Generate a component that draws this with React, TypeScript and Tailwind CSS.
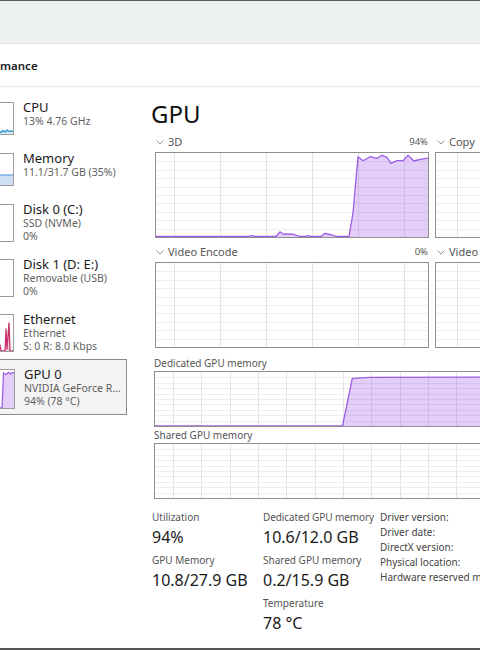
import React from "react";

type Pt = [number, number];

function Grid({ w, h, vx, rows }: { w: number; h: number; vx: number[]; rows: number }) {
  const hs = Array.from({ length: rows - 1 }, (_, i) => Math.round(((i + 1) * h) / rows) + 0.5);
  return (
    <g shapeRendering="crispEdges">
      {hs.map((y, i) => (
        <line key={"h" + i} x1={0} x2={w} y1={y} y2={y} stroke="#eeeeee" strokeWidth={1} />
      ))}
      {vx.map((x, i) => (
        <line key={"v" + i} x1={x + 0.5} x2={x + 0.5} y1={0} y2={h} stroke="#e4e4e4" strokeWidth={1} />
      ))}
    </g>
  );
}

function Series({ pts, h, stroke, fill }: { pts: Pt[]; h: number; stroke: string; fill: string }) {
  const line = pts.map((p) => p.join(",")).join(" ");
  const area = `${pts[0][0]},${h} ${line} ${pts[pts.length - 1][0]},${h}`;
  return (
    <g>
      <polygon points={area} fill={fill} />
      <polyline points={line} fill="none" stroke={stroke} strokeWidth={1.3} strokeLinejoin="round" />
    </g>
  );
}

function GraphBox({
  w,
  h,
  vx,
  rows = 10,
  children,
}: {
  w: number;
  h: number;
  vx: number[];
  rows?: number;
  children?: React.ReactNode;
}) {
  return (
    <div className="border border-[#8f8f8f] bg-white shrink-0" style={{ width: w + 2, height: h + 2 }}>
      <svg width={w} height={h} className="block">
        <Grid w={w} h={h} vx={vx} rows={rows} />
        {children}
      </svg>
    </div>
  );
}

function Chevron() {
  return (
    <svg width="8" height="5" viewBox="0 0 8 5" className="shrink-0">
      <polyline points="0.5,0.5 4,4 7.5,0.5" fill="none" stroke="#8a8a8a" strokeWidth="0.9" />
    </svg>
  );
}

const PURPLE = "#9d5ce8";
const PURPLE_FILL = "rgba(150,80,230,0.28)";

const gpu3d: Pt[] = [
  [0, 83.5],
  [92, 83.5],
  [95, 82.6],
  [99, 83.5],
  [120, 83.5],
  [124, 78.8],
  [128, 81.5],
  [131, 81],
  [137, 81.2],
  [144, 83.5],
  [150, 83.5],
  [152, 82.6],
  [155, 83.5],
  [165, 83.5],
  [169, 80.3],
  [176, 82],
  [181, 83.5],
  [193, 83.5],
  [197, 60],
  [202, 3.7],
  [207, 7.7],
  [214, 3.7],
  [221, 5.3],
  [226, 2.3],
  [231, 4.3],
  [235, 10.3],
  [241, 7.7],
  [247, 7.7],
  [252, 2.3],
  [258, 8],
  [264, 6.3],
  [270, 5.3],
  [272, 5.3],
];

const dedicated: Pt[] = [
  [0, 54],
  [187.5, 54],
  [197.3, 6.3],
  [215, 5.4],
  [330, 5.2],
];

function Thumb({ h, children }: { h: number; children?: React.ReactNode }) {
  return (
    <div className="-ml-[26px] mt-[3px] w-[40px] shrink-0 border border-[#9c9c9c] bg-white" style={{ height: h }}>
      <svg width="38" height={h - 2} className="block">
        {children}
      </svg>
    </div>
  );
}

function SideItem({
  title,
  lines,
  thumbH,
  height,
  selected,
  thumb,
}: {
  title: string;
  lines: string[];
  thumbH: number;
  height: number;
  selected?: boolean;
  thumb?: React.ReactNode;
}) {
  return (
    <div
      className={
        "flex shrink-0 items-start pt-[6px] " +
        (selected ? "-ml-[1px] w-[128px] border border-[#8a8a8a] bg-[#f3f3f3] pl-[1px]" : "w-[127px]")
      }
      style={{ height }}
    >
      <Thumb h={thumbH}>{thumb}</Thumb>
      <div className="ml-[9px] flex flex-col">
        <div className="text-[13px] leading-[16px] text-[#1a1a1a] whitespace-nowrap">{title}</div>
        {lines.map((l) => (
          <div key={l} className="text-[10.5px] leading-[13px] text-[#5f5f5f] whitespace-nowrap">
            {l}
          </div>
        ))}
      </div>
    </div>
  );
}

export default function App() {
  const vTop = [18, 64, 110, 156, 202, 248];
  const vRight = [21, 67, 113, 159, 205, 251];
  const vMem = [18, 46, 75, 103, 131, 160, 188, 216, 245, 273, 301];

  const cpuPts: Pt[] = [
    [0, 30],
    [20, 29],
    [24, 28],
    [26, 29.5],
    [28, 27.5],
    [30, 29],
    [32, 27],
    [34, 28.5],
    [36, 27.8],
    [38, 28.5],
  ];
  const ethPts: Pt[] = [
    [0, 36],
    [14, 36],
    [16, 20],
    [17, 36],
    [19, 28],
    [20, 36],
    [22, 24],
    [23, 34],
    [25, 30],
    [26, 36],
    [30, 36],
    [31, 14],
    [32, 34],
    [34, 8],
    [35, 36],
    [38, 36],
  ];

  return (
    <div className="relative flex h-[650px] w-[480px] flex-col overflow-hidden bg-white font-['Noto_Sans','Open_Sans',sans-serif]">
      {/* title bar */}
      <div className="h-[1px] shrink-0 bg-[#5c5c5c]" />
      <div className="h-[43px] shrink-0 border-b border-[#e1e7e6] bg-[#edf2f1]" />
      {/* header */}
      <div className="flex h-[43px] shrink-0 items-center border-b border-[#e9e9e9] pt-[1px]">
        <span className="text-[11.5px] font-semibold text-[#1b1b1b]">mance</span>
      </div>

      <div className="flex min-h-0 flex-1">
        {/* sidebar */}
        <div className="flex w-[128px] shrink-0 flex-col overflow-hidden pt-[6px]">
          <SideItem
            title="CPU"
            lines={["13% 4.76 GHz"]}
            thumbH={33}
            height={51}
            thumb={<Series pts={cpuPts} h={31} stroke="#2a8fc7" fill="#d4e9f5" />}
          />
          <SideItem
            title="Memory"
            lines={["11.1/31.7 GB (35%)"]}
            thumbH={33}
            height={51}
            thumb={
              <g>
                <rect x="0" y="21" width="38" height="10" fill="#cfe0f6" />
                <line x1="0" x2="38" y1="21" y2="21" stroke="#4b8fd6" strokeWidth="1" />
              </g>
            }
          />
          <SideItem title="Disk 0 (C:)" lines={["SSD (NVMe)", "0%"]} thumbH={38} height={55} />
          <SideItem title="Disk 1 (D: E:)" lines={["Removable (USB)", "0%"]} thumbH={38} height={55} />
          <SideItem
            title="Ethernet"
            lines={["Ethernet", "S: 0 R: 8.0 Kbps"]}
            thumbH={38}
            height={54}
            thumb={<Series pts={ethPts} h={36} stroke="#c8316c" fill="#f3d3df" />}
          />
          <SideItem
            title="GPU 0"
            lines={["NVIDIA GeForce R...", "94%  (78 °C)"]}
            thumbH={40}
            height={56}
            selected
            thumb={
              <Series
                pts={[
                  [0, 38],
                  [26, 38],
                  [27.5, 3],
                  [30, 4.5],
                  [32.5, 2.5],
                  [34.5, 4],
                  [36.5, 2.5],
                  [38, 3],
                ]}
                h={38}
                stroke={PURPLE}
                fill={PURPLE_FILL}
              />
            }
          />
        </div>

        {/* main */}
        <div className="ml-[22px] flex min-w-0 flex-1 flex-col overflow-hidden">
          <div className="pl-[1px] pt-[13px] text-[24px] leading-[28px] text-[#111]">GPU</div>

          {/* row 1 */}
          <div className="mt-[7px] flex gap-[6px] pl-[5px]">
            <div className="flex w-[274px] shrink-0 flex-col">
              <div className="flex h-[14px] items-center pr-[1px]">
                <div className="flex items-center gap-[4px] pl-[1px]">
                  <Chevron />
                  <span className="text-[11px] text-[#555]">3D</span>
                </div>
                <span className="ml-auto text-[9.5px] text-[#555]">94%</span>
              </div>
              <div className="mt-[3px]">
                <GraphBox w={272} h={84} vx={vTop}>
                  <Series pts={gpu3d} h={84} stroke={PURPLE} fill={PURPLE_FILL} />
                </GraphBox>
              </div>
            </div>
            <div className="flex w-[274px] shrink-0 flex-col">
              <div className="flex h-[14px] items-center gap-[4px] pl-[2px]">
                <Chevron />
                <span className="text-[11px] text-[#555]">Copy</span>
              </div>
              <div className="mt-[3px]">
                <GraphBox w={272} h={84} vx={vRight} />
              </div>
            </div>
          </div>

          {/* row 2 */}
          <div className="mt-[7px] flex gap-[6px] pl-[5px]">
            <div className="flex w-[274px] shrink-0 flex-col">
              <div className="flex h-[14px] items-center pr-[1px]">
                <div className="flex items-center gap-[4px] pl-[1px]">
                  <Chevron />
                  <span className="text-[11px] text-[#555]">Video Encode</span>
                </div>
                <span className="ml-auto text-[9.5px] text-[#555]">0%</span>
              </div>
              <div className="mt-[3px]">
                <GraphBox w={272} h={84} vx={vTop} />
              </div>
            </div>
            <div className="flex w-[274px] shrink-0 flex-col">
              <div className="flex h-[14px] items-center gap-[4px] pl-[2px]">
                <Chevron />
                <span className="whitespace-nowrap text-[11px] text-[#555]">Video Decode</span>
              </div>
              <div className="mt-[3px]">
                <GraphBox w={272} h={84} vx={vRight} />
              </div>
            </div>
          </div>

          {/* dedicated memory */}
          <div className="mt-[8px] pl-[4px]">
            <div className="h-[14px] text-[10px] leading-[14px] text-[#555]">Dedicated GPU memory</div>
            <div className="mt-[1px]">
              <GraphBox w={340} h={54} vx={vMem}>
                <Series pts={dedicated} h={54} stroke={PURPLE} fill={PURPLE_FILL} />
              </GraphBox>
            </div>
          </div>

          {/* shared memory */}
          <div className="mt-[1px] pl-[4px]">
            <div className="h-[14px] text-[10px] leading-[14px] text-[#555]">Shared GPU memory</div>
            <div className="mt-[1px]">
              <GraphBox w={340} h={54} vx={vMem} />
            </div>
          </div>

          {/* stats */}
          <div className="mt-[10px] flex pl-[2px]">
            <div className="flex w-[111px] shrink-0 flex-col">
              <div className="mb-[3px]">
                <div className="text-[10px] leading-[16px] text-[#555]">Utilization</div>
                <div className="text-[16px] leading-[24px] text-[#1a1a1a]">94%</div>
              </div>
              <div className="mb-[3px]">
                <div className="text-[10px] leading-[16px] text-[#555]">GPU Memory</div>
                <div className="whitespace-nowrap text-[16px] leading-[24px] text-[#1a1a1a]">10.8/27.9 GB</div>
              </div>
            </div>
            <div className="flex w-[117px] shrink-0 flex-col">
              <div className="mb-[3px]">
                <div className="whitespace-nowrap text-[10px] leading-[16px] tracking-[-0.1px] text-[#555]">Dedicated GPU memory</div>
                <div className="whitespace-nowrap text-[16px] leading-[24px] text-[#1a1a1a]">10.6/12.0 GB</div>
              </div>
              <div className="mb-[3px]">
                <div className="whitespace-nowrap text-[10px] leading-[16px] text-[#555]">Shared GPU memory</div>
                <div className="whitespace-nowrap text-[16px] leading-[24px] text-[#1a1a1a]">0.2/15.9 GB</div>
              </div>
              <div>
                <div className="text-[10px] leading-[16px] text-[#555]">Temperature</div>
                <div className="text-[16px] leading-[24px] text-[#1a1a1a]">78 °C</div>
              </div>
            </div>
            <div className="flex flex-col pt-[1px] text-[10px] leading-[15px] text-[#444] whitespace-nowrap">
              <div>Driver version:</div>
              <div>Driver date:</div>
              <div>DirectX version:</div>
              <div>Physical location:</div>
              <div>Hardware reserved memory:</div>
            </div>
          </div>
        </div>
      </div>

      <div className="absolute bottom-0 left-0 h-[2px] w-full bg-[#555]" />
    </div>
  );
}
